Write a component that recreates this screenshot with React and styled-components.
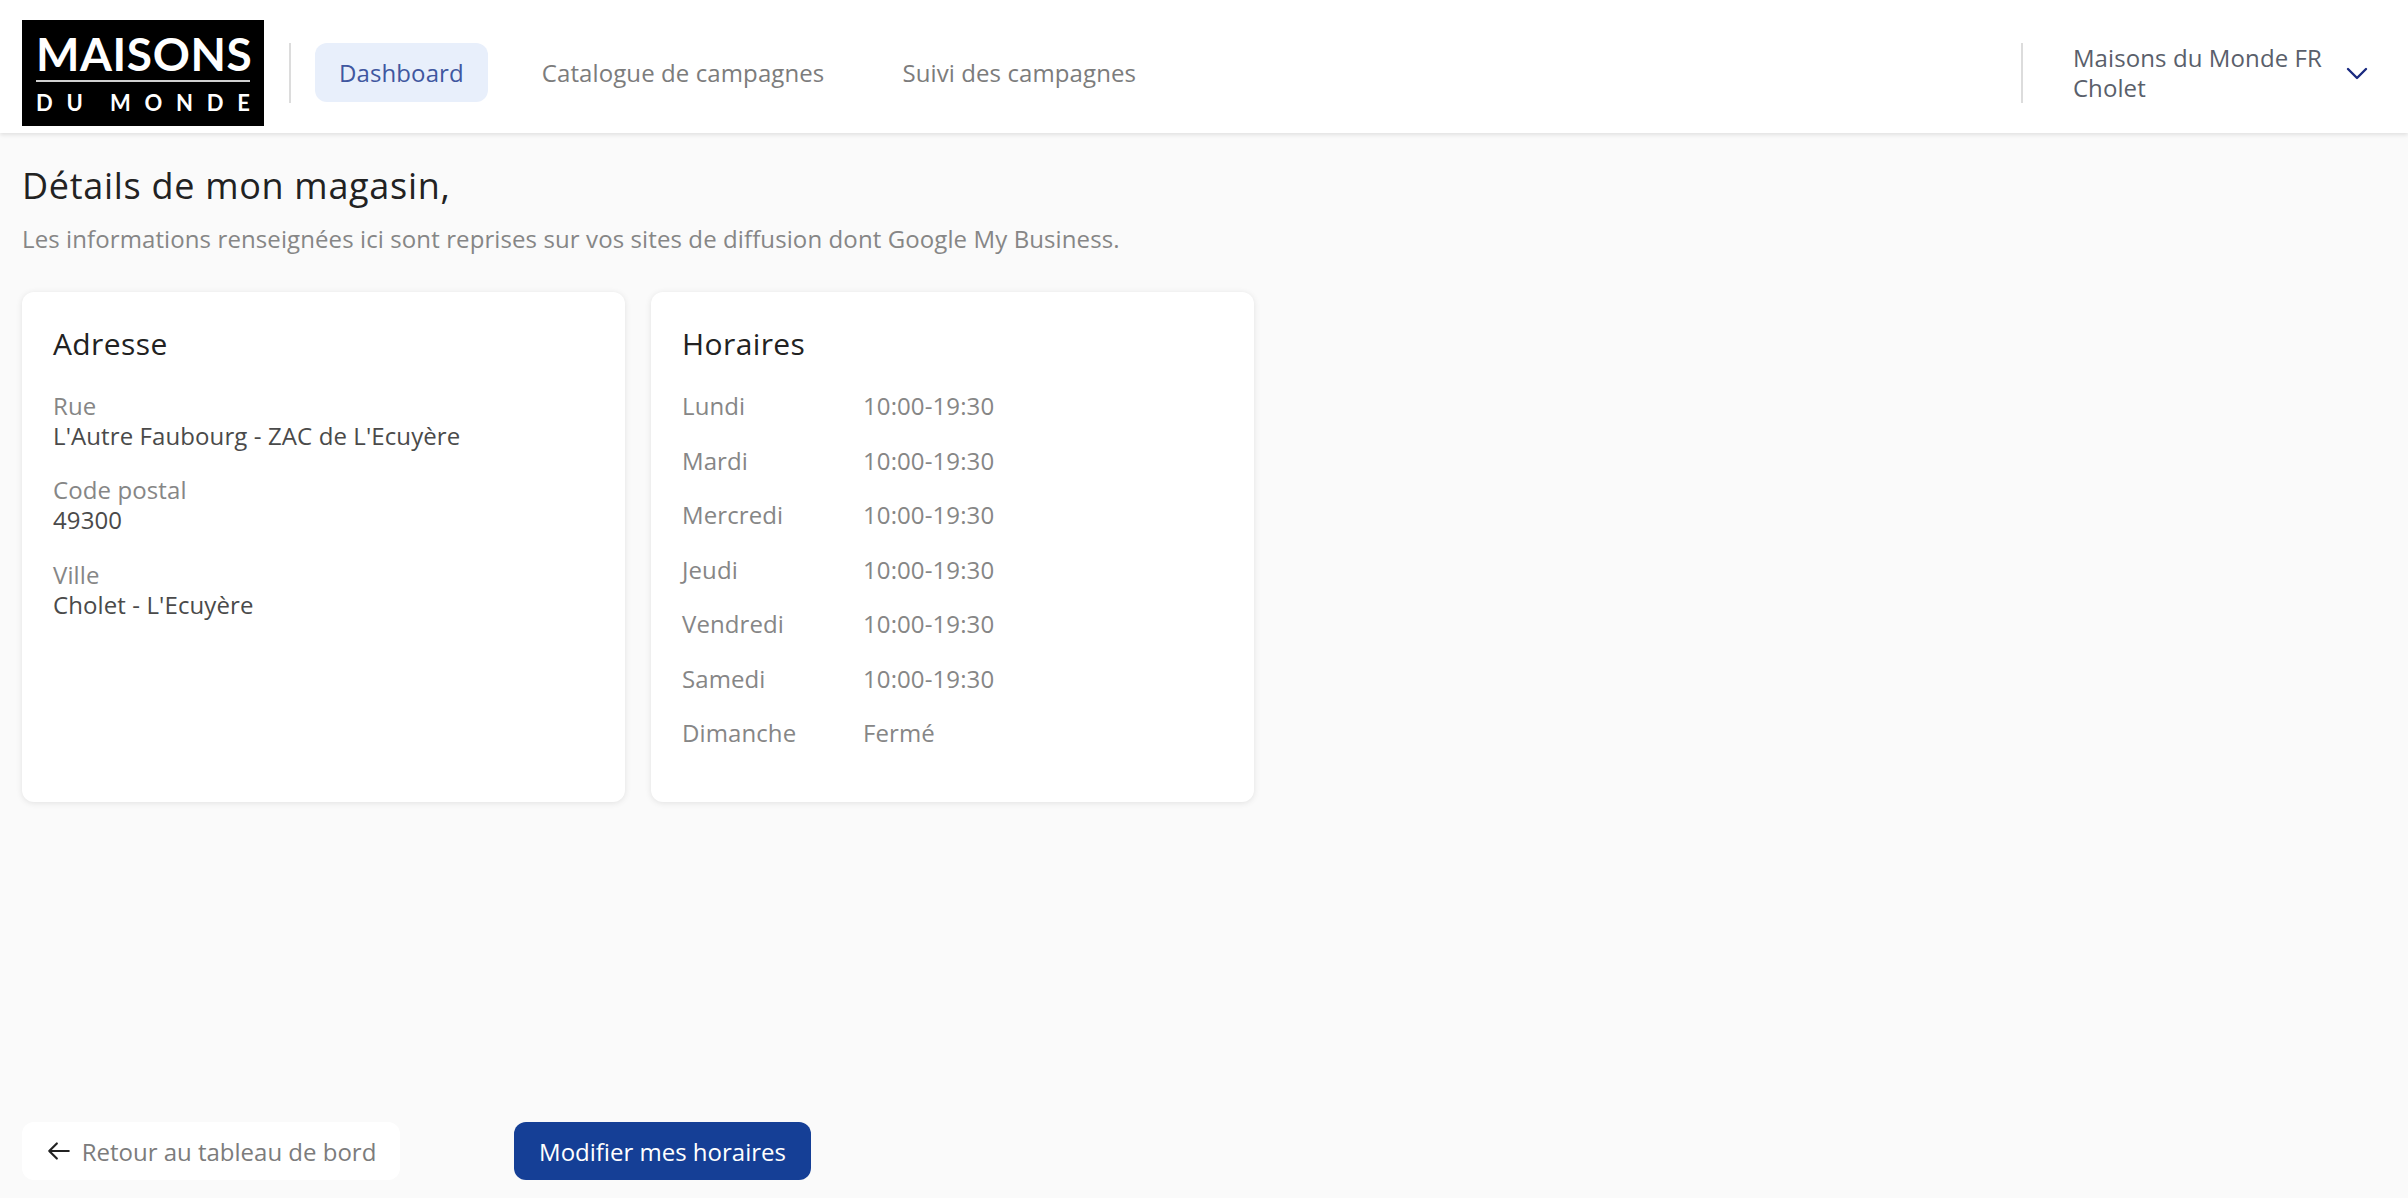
import React from "react";
import styled, { createGlobalStyle } from "styled-components";

const Global = createGlobalStyle`
  html, body { margin: 0; padding: 0; background: #fff; }
  body { font-family: "Open Sans", "Noto Sans", sans-serif; letter-spacing: 0.1px; }
  * { box-sizing: border-box; }
`;

const Page = styled.div`
  height: 1198px;
  display: flex;
  flex-direction: column;
  background: #fafafa;
`;

const Header = styled.header`
  height: 133px;
  flex: none;
  background: #fff;
  box-shadow: 0 2px 4px rgba(0, 0, 0, 0.1);
  display: flex;
  align-items: center;
  padding: 12px 22px 0;
`;

const Logo = styled.div`
  width: 242px;
  height: 106px;
  background: #000;
  color: #fff;
  flex: none;
  display: flex;
  flex-direction: column;
  align-items: center;
  padding: 11px 14px 0;
  font-family: "Lato", sans-serif;
`;

const LogoTop = styled.div`
  font-size: 46px;
  line-height: 46px;
  font-weight: 700;
  letter-spacing: 0.6px;
  border-bottom: 2px solid #d0d0d0;
  width: 100%;
  text-align: center;
  height: 51px;
  white-space: nowrap;
`;

const LogoBottom = styled.div`
  font-size: 22px;
  line-height: 26px;
  font-weight: 700;
  margin-top: 8px;
  width: 100%;
  display: flex;
  justify-content: space-between;
`;

const Divider = styled.div`
  width: 2px;
  height: 60px;
  background: #dcdcdc;
  flex: none;
  margin-left: ${(p) => p.$offset || 0}px;
`;

const Nav = styled.nav`
  display: flex;
  align-items: center;
  gap: 30px;
  margin-left: 24px;
`;

const NavItem = styled.a`
  height: 59px;
  display: flex;
  align-items: center;
  padding: 0 24px;
  border-radius: 12px;
  font-size: 24px;
  color: ${(p) => (p.$active ? "#3f57a0" : "#7c7c7c")};
  background: ${(p) => (p.$active ? "#e8effb" : "transparent")};
  white-space: nowrap;
`;

const Account = styled.div`
  margin-left: auto;
  display: flex;
  align-items: center;
`;

const AccountText = styled.div`
  margin-left: 50px;
  font-size: 24px;
  line-height: 30px;
  color: #5a5f6b;
`;

const Chevron = styled.svg`
  width: 24px;
  height: 24px;
  margin-left: 23px;
  margin-right: 17px;
  color: #1a2a80;
`;

const Main = styled.main`
  flex: 1;
  padding: 31px 22px 0;
`;

const Title = styled.h1`
  margin: 0;
  font-size: 36px;
  line-height: 44px;
  font-weight: 500;
  letter-spacing: 0.7px;
  color: #222;
`;

const Subtitle = styled.p`
  margin: 16px 0 0;
  font-size: 24px;
  line-height: 30px;
  color: #868686;
`;

const Cards = styled.div`
  display: flex;
  gap: 26px;
  margin-top: 38px;
`;

const Card = styled.section`
  width: 603px;
  height: 510px;
  background: #fff;
  border-radius: 12px;
  box-shadow: 0 1px 6px rgba(0, 0, 0, 0.1);
  padding: 32px 31px;
`;

const CardTitle = styled.h2`
  margin: 0 0 27px;
  font-size: 30px;
  line-height: 40px;
  font-weight: 500;
  letter-spacing: 0.4px;
  color: #222;
`;

const Field = styled.div`
  margin-bottom: 24.4px;
  font-size: 24px;
  line-height: 30px;
`;

const Label = styled.div`
  color: #868686;
`;

const Value = styled.div`
  color: #4a4a4a;
`;

const Hours = styled.div`
  display: grid;
  grid-template-columns: 181px 1fr;
  row-gap: 24.5px;
  font-size: 24px;
  line-height: 30px;
  color: #868686;
`;

const Footer = styled.footer`
  flex: none;
  display: flex;
  align-items: center;
  gap: 114px;
  padding: 0 22px 18px;
`;

const BackButton = styled.button`
  width: 378px;
  height: 58px;
  border: 0;
  border-radius: 12px;
  background: #fff;
  display: flex;
  align-items: center;
  justify-content: center;
  gap: 10px;
  font: inherit;
  font-size: 24px;
  color: #7c7c7c;
  white-space: nowrap;
`;

const BackIcon = styled.svg`
  width: 26px;
  height: 26px;
  color: #222;
  flex: none;
`;

const PrimaryButton = styled.button`
  width: 297px;
  height: 58px;
  border: 0;
  border-radius: 12px;
  background: #153f96;
  color: #fff;
  font: inherit;
  font-size: 24px;
  font-weight: 500;
  white-space: nowrap;
`;

const hours = [
  ["Lundi", "10:00-19:30"],
  ["Mardi", "10:00-19:30"],
  ["Mercredi", "10:00-19:30"],
  ["Jeudi", "10:00-19:30"],
  ["Vendredi", "10:00-19:30"],
  ["Samedi", "10:00-19:30"],
  ["Dimanche", "Fermé"],
];

const fields = [
  ["Rue", "L'Autre Faubourg - ZAC de L'Ecuyère"],
  ["Code postal", "49300"],
  ["Ville", "Cholet - L'Ecuyère"],
];

export default function App() {
  return (
    <Page>
      <Global />
      <Header>
        <Logo>
          <LogoTop>MAISONS</LogoTop>
          <LogoBottom>
            {["D", "U", " ", "M", "O", "N", "D", "E"].map((c, i) => (
              <span key={i}>{c}</span>
            ))}
          </LogoBottom>
        </Logo>
        <Divider $offset={25} />
        <Nav>
          <NavItem $active>Dashboard</NavItem>
          <NavItem>Catalogue de campagnes</NavItem>
          <NavItem>Suivi des campagnes</NavItem>
        </Nav>
        <Account>
          <Divider />
          <AccountText>
            Maisons du Monde FR
            <br />
            Cholet
          </AccountText>
          <Chevron viewBox="0 0 24 24" fill="none" stroke="currentColor" strokeWidth="2.4" strokeLinecap="round" strokeLinejoin="round">
            <path d="M3 8l9 9 9-9" />
          </Chevron>
        </Account>
      </Header>
      <Main>
        <Title>Détails de mon magasin,</Title>
        <Subtitle>Les informations renseignées ici sont reprises sur vos sites de diffusion dont Google My Business.</Subtitle>
        <Cards>
          <Card>
            <CardTitle>Adresse</CardTitle>
            {fields.map(([l, v]) => (
              <Field key={l}>
                <Label>{l}</Label>
                <Value>{v}</Value>
              </Field>
            ))}
          </Card>
          <Card>
            <CardTitle>Horaires</CardTitle>
            <Hours>
              {hours.map(([d, h]) => (
                <React.Fragment key={d}>
                  <span>{d}</span>
                  <span>{h}</span>
                </React.Fragment>
              ))}
            </Hours>
          </Card>
        </Cards>
      </Main>
      <Footer>
        <BackButton>
          <BackIcon viewBox="0 0 24 24" fill="none" stroke="currentColor" strokeWidth="2" strokeLinecap="round" strokeLinejoin="round">
            <path d="M21 12H3M10 5l-7 7 7 7" />
          </BackIcon>
          Retour au tableau de bord
        </BackButton>
        <PrimaryButton>Modifier mes horaires</PrimaryButton>
      </Footer>
    </Page>
  );
}
